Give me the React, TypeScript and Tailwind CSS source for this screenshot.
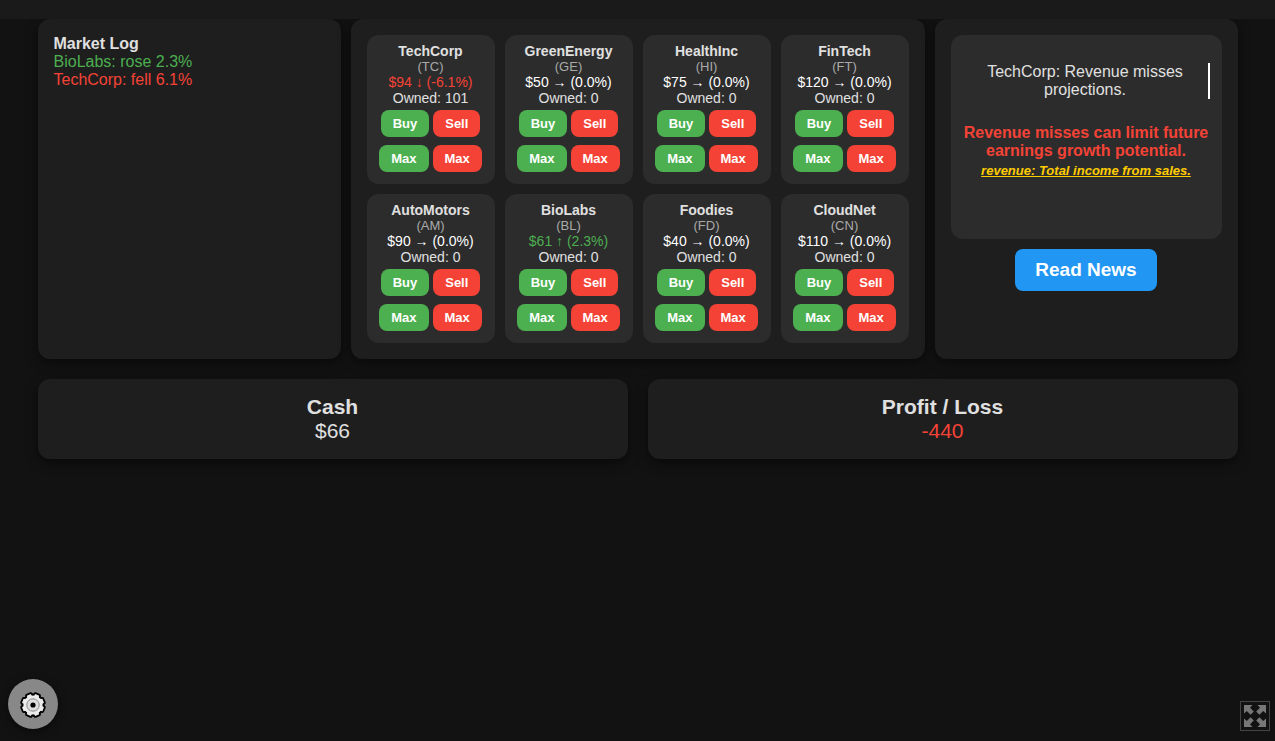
type Stock = {
  name: string
  symbol: string
  price: number
  change: number
  owned: number
}

const STOCKS: Stock[] = [
  { name: 'TechCorp', symbol: 'TC', price: 94, change: -6.1, owned: 101 },
  { name: 'GreenEnergy', symbol: 'GE', price: 50, change: 0, owned: 0 },
  { name: 'HealthInc', symbol: 'HI', price: 75, change: 0, owned: 0 },
  { name: 'FinTech', symbol: 'FT', price: 120, change: 0, owned: 0 },
  { name: 'AutoMotors', symbol: 'AM', price: 90, change: 0, owned: 0 },
  { name: 'BioLabs', symbol: 'BL', price: 61, change: 2.3, owned: 0 },
  { name: 'Foodies', symbol: 'FD', price: 40, change: 0, owned: 0 },
  { name: 'CloudNet', symbol: 'CN', price: 110, change: 0, owned: 0 },
]

const GEAR_TEETH = [22.5, 67.5, 112.5, 157.5, 202.5, 247.5, 292.5, 337.5]

const panel = 'rounded-xl bg-[#1e1e1e] p-4 shadow-[0_4px_12px_rgba(0,0,0,0.5)]'
const tradeButton = 'cursor-pointer rounded-lg px-3 py-1.5 text-[13px] leading-[15px] font-bold text-white'
const buyButton = `${tradeButton} bg-[#4caf50] hover:bg-[#43a047]`
const sellButton = `${tradeButton} bg-[#f44336] hover:bg-[#e53935]`

const priceColor = (change: number) => {
  if (change > 0) return 'text-[#4caf50]'
  if (change < 0) return 'text-[#f44336]'
  return 'text-white'
}

const arrow = (change: number) => {
  if (change > 0) return '↑'
  if (change < 0) return '↓'
  return '→'
}

const StockCard = ({ stock }: { stock: Stock }) => (
  <div className="w-32 rounded-xl bg-[#2c2c2c] pt-2 pb-3 text-center text-sm leading-4">
    <h3 className="font-bold">{stock.name}</h3>
    <p className="text-[13px] leading-[15px] text-[#aaaaaa]">({stock.symbol})</p>
    <p className={priceColor(stock.change)}>
      {`$${stock.price} ${arrow(stock.change)} (${stock.change.toFixed(1)}%)`}
    </p>
    <p>{`Owned: ${stock.owned}`}</p>
    <div className="mt-1 flex justify-center gap-1">
      <button className={buyButton}>Buy</button>
      <button className={sellButton}>Sell</button>
    </div>
    <div className="mt-2 flex justify-center gap-1">
      <button className={buyButton}>Max</button>
      <button className={sellButton}>Max</button>
    </div>
  </div>
)

const MarketLog = () => (
  <section className={`${panel} flex-1 leading-[18px]`}>
    <h2 className="font-bold">Market Log</h2>
    <p className="text-[#4caf50]">BioLabs: rose 2.3%</p>
    <p className="text-[#f44336]">TechCorp: fell 6.1%</p>
  </section>
)

const News = () => (
  <section className={`${panel} flex flex-1 flex-col items-center gap-2.5`}>
    <div className="min-h-[204px] w-full rounded-xl bg-[#2c2c2c] p-3 text-center leading-[18px]">
      <p className="mt-4 border-r-2 border-white">TechCorp: Revenue misses projections.</p>
      <p className="mt-[25px] font-bold text-[#f44336]">
        Revenue misses can limit future earnings growth potential.
      </p>
      <p className="mt-0.5 text-[13px] font-bold text-[#ffcc00] italic underline">
        revenue: Total income from sales.
      </p>
    </div>
    <button className="cursor-pointer rounded-lg bg-[#2196f3] px-5 py-2.5 text-[19px] leading-[22px] font-bold text-white hover:bg-[#1e88e5]">
      Read News
    </button>
  </section>
)

const GearShape = () => (
  <>
    <circle cx="14" cy="14" r="9.6" />
    {GEAR_TEETH.map((angle) => (
      <path key={angle} d="M11.2 6.5 L11.9 3 H16.1 L16.8 6.5 Z" transform={`rotate(${angle} 14 14)`} />
    ))}
  </>
)

const GearIcon = () => (
  <svg viewBox="0 0 28 28" className="mt-0.5 size-7" aria-hidden="true">
    <g fill="#000" stroke="#000" strokeWidth="3.6" strokeLinejoin="round">
      <GearShape />
    </g>
    <g fill="#ececec">
      <GearShape />
    </g>
    <circle cx="14" cy="14" r="6.2" fill="#dedede" stroke="#8a8a8a" />
    <circle cx="14" cy="14" r="2.6" fill="#000" />
  </svg>
)

const ExpandIcon = () => (
  <svg viewBox="0 0 22 22" className="size-[22px]" fill="#777" aria-hidden="true">
    {[0, 90, 180, 270].map((angle) => (
      <path key={angle} d="M0 0 H8.5 L6 2.8 L9.8 6.6 L6.6 9.8 L2.8 6 L0 8.5 Z" transform={`rotate(${angle} 11 11)`} />
    ))}
  </svg>
)

export default function App() {
  return (
    <div className="min-h-screen bg-[#121212] font-['Liberation_Sans',Arial,sans-serif] text-base text-[#e0e0e0]">
      <header className="relative h-[19px] bg-[#1a1a1a]" />

      <main className="mx-auto flex max-w-[1200px] flex-col gap-5">
        <div className="flex gap-2.5">
          <MarketLog />
          <section className={`${panel} grid grid-cols-4 gap-2.5`}>
            {STOCKS.map((stock) => (
              <StockCard key={stock.symbol} stock={stock} />
            ))}
          </section>
          <News />
        </div>

        <div className="flex gap-5 text-center text-[21px] leading-6">
          <section className={`${panel} flex-1`}>
            <h2 className="font-bold">Cash</h2>
            <p>$66</p>
          </section>
          <section className={`${panel} flex-1`}>
            <h2 className="font-bold">Profit / Loss</h2>
            <p className="text-[#f44336]">-440</p>
          </section>
        </div>
      </main>

      <button
        aria-label="Settings"
        className="fixed bottom-3 left-2 flex size-[50px] cursor-pointer items-center justify-center rounded-full bg-[#888888] shadow-[0_2px_8px_rgba(0,0,0,0.5)]"
      >
        <GearIcon />
      </button>
      <button
        aria-label="Fullscreen"
        className="fixed right-[5px] bottom-2.5 flex size-[30px] cursor-pointer items-center justify-center border border-[#444444]"
      >
        <ExpandIcon />
      </button>
    </div>
  )
}
